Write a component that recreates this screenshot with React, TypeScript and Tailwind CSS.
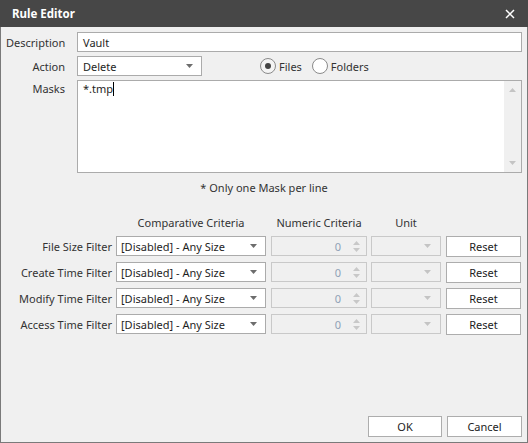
import React from "react";

const filters = [
  "File Size Filter",
  "Create Time Filter",
  "Modify Time Filter",
  "Access Time Filter",
];

const Caret = ({ light }: { light?: boolean }) => (
  <svg width="7" height="4" viewBox="0 0 7 4" className="shrink-0">
    <path d="M0 0 L7 0 L3.5 4 Z" fill={light ? "#c4c4c4" : "#6d6d6d"} />
  </svg>
);

const Spinner = () => (
  <div className="flex flex-col gap-[3px] shrink-0">
    <svg width="7" height="4" viewBox="0 0 7 4">
      <path d="M0 4 L7 4 L3.5 0 Z" fill="#c8c8c8" />
    </svg>
    <svg width="7" height="4" viewBox="0 0 7 4">
      <path d="M0 0 L7 0 L3.5 4 Z" fill="#c8c8c8" />
    </svg>
  </div>
);

const Radio = ({ checked, label }: { checked?: boolean; label: string }) => (
  <div className="flex items-center gap-[3px]">
    <div
      className={`w-[16px] h-[16px] rounded-full border border-[#8a8a8a] flex items-center justify-center ${
        checked ? "bg-[#f4f4f4]" : "bg-white"
      }`}
    >
      {checked && <div className="w-[6px] h-[6px] rounded-full bg-[#444]" />}
    </div>
    <span className="text-[#333]">{label}</span>
  </div>
);

const Btn = ({ label, w }: { label: string; w: string }) => (
  <div
    className={`${w} h-[21px] bg-white border border-[#adadad] flex items-center justify-center text-[#222]`}
  >
    {label}
  </div>
);

export default function App() {
  return (
    <div className="w-[528px] h-[443px] flex flex-col bg-[#f0f0f0] border-x border-b border-[#7a7a7a] font-['Noto_Sans',sans-serif] text-[11px] leading-none select-none">
      {/* title bar */}
      <div className="h-[27px] shrink-0 bg-[#474747] flex items-center justify-between pl-[12px] pr-[13px] -mx-px">
        <span className="text-white font-bold text-[11.5px]">Rule Editor</span>
        <svg width="10" height="10" viewBox="0 0 10 10">
          <path d="M1 1 L9 9 M9 1 L1 9" stroke="#fff" strokeWidth="1.5" />
        </svg>
      </div>

      <div className="flex-1 flex flex-col pl-[5px] pr-[5px] pt-[5px] pb-[5px]">
        {/* description */}
        <div className="flex items-center gap-[12px] h-[20px]">
          <span className="w-[59px] text-right text-[#333]">Description</span>
          <div className="flex-1 h-[20px] bg-white border border-[#ababab] flex items-center px-[5px] text-[#1e1e1e]">
            Vault
          </div>
        </div>

        {/* action */}
        <div className="flex items-center gap-[12px] h-[20px] mt-[4px]">
          <span className="w-[59px] text-right text-[#333]">Action</span>
          <div className="w-[125px] h-[20px] bg-white border border-[#ababab] flex items-center justify-between pl-[5px] pr-[8px] text-[#1e1e1e]">
            <span>Delete</span>
            <Caret />
          </div>
          <div className="flex items-center gap-[10px] ml-[46px]">
            <Radio checked label="Files" />
            <Radio label="Folders" />
          </div>
        </div>

        {/* masks */}
        <div className="flex gap-[12px] mt-[4px]">
          <span className="w-[59px] text-right text-[#333] pt-[3px]">Masks</span>
          <div className="flex-1 h-[93px] bg-white border border-[#ababab] flex">
            <div className="flex-1 px-[5px] pt-[2px] text-[#1e1e1e] flex items-start">
              <span>*.tmp</span>
              <span className="w-px h-[14px] bg-black -mt-[1px]" />
            </div>
            <div className="w-[17px] bg-[#f0f0f0] flex flex-col items-center justify-between py-[7px]">
              <svg width="7" height="4" viewBox="0 0 7 4">
                <path d="M0 4 L7 4 L3.5 0 Z" fill="#c4c4c4" />
              </svg>
              <svg width="7" height="4" viewBox="0 0 7 4">
                <path d="M0 0 L7 0 L3.5 4 Z" fill="#c4c4c4" />
              </svg>
            </div>
          </div>
        </div>

        <div className="h-[20px] mt-[4px] flex items-center justify-center text-[#333]">
          * Only one Mask per line
        </div>

        {/* header */}
        <div className="flex items-center h-[20px] mt-[15px] text-[#333]">
          <div className="w-[106px]" />
          <div className="w-[150px] ml-[4px] text-center">Comparative Criteria</div>
          <div className="w-[96px] ml-[5px] text-center">Numeric Criteria</div>
          <div className="w-[70px] ml-[4px] text-center">Unit</div>
        </div>

        <div className="flex flex-col gap-[6px] mt-[4px]">
          {filters.map((f) => (
            <div key={f} className="flex items-center h-[20px]">
              <span className="w-[106px] text-right text-[#333]">{f}</span>
              <div className="w-[150px] ml-[4px] h-[20px] bg-white border border-[#ababab] flex items-center justify-between pl-[4px] pr-[8px] text-[#1e1e1e]">
                <span>[Disabled] - Any Size</span>
                <Caret />
              </div>
              <div className="w-[96px] ml-[5px] h-[20px] border border-[#c9c9c9] flex items-center justify-end pr-[6px] gap-[12px] text-[#8fa1b6]">
                <span>0</span>
                <Spinner />
              </div>
              <div className="w-[70px] ml-[4px] h-[20px] border border-[#c9c9c9] flex items-center justify-end pr-[9px]">
                <Caret light />
              </div>
              <div className="ml-[5px]">
                <Btn label="Reset" w="w-[75px]" />
              </div>
            </div>
          ))}
        </div>

        <div className="mt-auto flex justify-end gap-[5px]">
          <Btn label="OK" w="w-[74px]" />
          <Btn label="Cancel" w="w-[75px]" />
        </div>
      </div>
    </div>
  );
}
